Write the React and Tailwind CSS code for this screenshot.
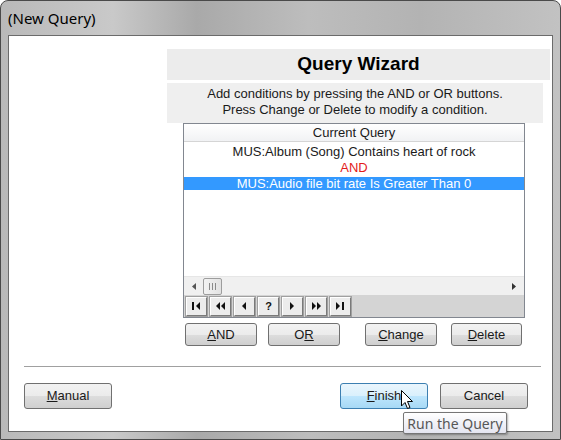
import React from "react"

const font = { fontFamily: '"Liberation Sans", Arial, sans-serif' }

// dialog push button, Vista style
function Btn({ children, className = "", hot = false }) {
  return (
    <div
      className={`flex items-center justify-center rounded-[3px] border text-[13px] text-[#1a1a1a] ${
        hot
          ? "border-[#3c7fb1] bg-[linear-gradient(#eaf6fd_0%,#d9f0fc_50%,#bee6fd_50%,#a7d9f5_100%)]"
          : "border-[#707070] bg-[linear-gradient(#f2f2f2_0%,#ebebeb_50%,#dddddd_50%,#cfcfcf_100%)]"
      } ${className}`}
    >
      {children}
    </div>
  )
}

function NavBtn({ children }) {
  return (
    <div className="flex h-[19px] w-[21px] items-center justify-center border border-t-white border-l-white border-r-[#7a7a7a] border-b-[#7a7a7a] bg-[#ececec] shadow-[0_0_0_1px_#a0a0a0]">
      {children}
    </div>
  )
}

const Tri = ({ dir = "l", x = 0 }) =>
  dir === "l" ? (
    <polygon points={`${x + 4},0 ${x + 4},8 ${x},4`} fill="#111" />
  ) : (
    <polygon points={`${x},0 ${x},8 ${x + 4},4`} fill="#111" />
  )

function Navigator() {
  return (
    <div className="flex h-[22px] items-center gap-[3px] bg-[#d4d4d4] pl-[2px]">
      <NavBtn>
        <svg width="9" height="8">
          <rect x="0" y="0" width="2" height="8" fill="#111" />
          <Tri dir="l" x={4} />
        </svg>
      </NavBtn>
      <NavBtn>
        <svg width="10" height="8">
          <Tri dir="l" x={0} />
          <Tri dir="l" x={5} />
        </svg>
      </NavBtn>
      <NavBtn>
        <svg width="5" height="8">
          <Tri dir="l" x={0} />
        </svg>
      </NavBtn>
      <NavBtn>
        <span className="text-[11px] font-bold leading-none text-[#111]">?</span>
      </NavBtn>
      <NavBtn>
        <svg width="5" height="8">
          <Tri dir="r" x={0} />
        </svg>
      </NavBtn>
      <NavBtn>
        <svg width="10" height="8">
          <Tri dir="r" x={0} />
          <Tri dir="r" x={5} />
        </svg>
      </NavBtn>
      <NavBtn>
        <svg width="9" height="8">
          <Tri dir="r" x={0} />
          <rect x="6" y="0" width="2" height="8" fill="#111" />
        </svg>
      </NavBtn>
    </div>
  )
}

function ScrollBar() {
  return (
    <div className="flex h-[19px] items-center border-t border-[#e6e6e6] bg-[#f0f0f0] px-[8px]">
      <svg width="4" height="7">
        <polygon points="4,0 4,7 0,3.5" fill="#555" />
      </svg>
      <div className="ml-[7px] flex h-[17px] w-[19px] items-center justify-center gap-[2px] rounded-[2px] border border-[#9d9d9d] bg-[linear-gradient(90deg,#f3f3f3,#e2e2e2)]">
        <span className="h-[7px] w-px bg-[#8a8a8a]" />
        <span className="h-[7px] w-px bg-[#8a8a8a]" />
        <span className="h-[7px] w-px bg-[#8a8a8a]" />
      </div>
      <div className="flex-1" />
      <svg width="4" height="7">
        <polygon points="0,0 0,7 4,3.5" fill="#333" />
      </svg>
    </div>
  )
}

function QueryGrid() {
  return (
    <div className="ml-[16px] flex h-[195px] w-[342px] flex-col border border-[#828790] bg-white text-[13px] text-[#1a1a1a]">
      <div className="h-[18px] border-b border-[#d5d5d5] bg-[linear-gradient(#ffffff,#f1f2f4)] text-center leading-[17px]">
        Current Query
      </div>
      <div className="mt-[2px] h-[16px] text-center leading-[16px]">MUS:Album (Song) Contains heart of rock</div>
      <div className="h-[16px] text-center leading-[16px] text-[#e31b1b]">AND</div>
      <div className="mt-[1px] h-[13px] bg-[#3399ff] text-center leading-[13px] text-white">
        MUS:Audio file bit rate Is Greater Than 0
      </div>
      <div className="flex-1" />
      <ScrollBar />
      <Navigator />
    </div>
  )
}

export default function App() {
  return (
    <div className="relative h-[440px] w-[561px] overflow-hidden bg-white" style={font}>
      <div className="flex h-[440px] w-[561px] flex-col rounded-t-[8px] border border-[#4a4a4a] bg-[linear-gradient(90deg,#b9b9b9_0%,#c9c9c9_20%,#a9a9a9_35%,#bdbdbd_55%,#b3b3b3_75%,#c2c2c2_100%)]">
        <div className="h-[34px] px-[7px] pt-[6px] text-[15px] text-black" style={{ fontFamily: '"Noto Sans", "Open Sans", sans-serif' }}>
          (New Query)
        </div>
        <div className="mx-[7px] mb-[7px] flex flex-1 flex-col border border-[#6b6b6b] bg-white">
          <div className="ml-[158px] mt-[13px] flex flex-col">
            <div className="flex h-[31px] w-[383px] items-center justify-center bg-[#ececec] text-[19px] font-bold text-black">
              Query Wizard
            </div>
            <div className="mt-[3px] h-[40px] w-[376px] bg-[#efefef] pt-[3px] text-center text-[13px] leading-[16px] text-[#1a1a1a]">
              Add conditions by pressing the AND or OR buttons.
              <br />
              Press Change or Delete to modify a condition.
            </div>
            <QueryGrid />
            <div className="mt-[5px] flex h-[23px]">
              <Btn className="ml-[18px] w-[72px]">
                <u>A</u>ND
              </Btn>
              <Btn className="ml-[11px] w-[72px]">
                O<u>R</u>
              </Btn>
              <Btn className="ml-[25px] w-[72px]">
                <u>C</u>hange
              </Btn>
              <Btn className="ml-[14px] w-[71px]">
                <u>D</u>elete
              </Btn>
            </div>
          </div>
          <div className="ml-[15px] mt-[20px] h-px w-[517px] bg-[#a0a0a0]" />
          <div className="mt-[16px] flex h-[26px]">
            <Btn className="ml-[15px] w-[88px]">
              <u>M</u>anual
            </Btn>
            <Btn hot className="ml-[228px] w-[88px]">
              <u>F</u>inish
            </Btn>
            <Btn className="ml-[12px] w-[88px]">Cancel</Btn>
          </div>
        </div>
      </div>

      {/* tooltip over the Finish button */}
      <div
        className="absolute left-[403px] top-[412px] flex h-[22px] w-[104px] items-center justify-center rounded-[2px] border border-[#767676] bg-[linear-gradient(#ffffff,#e4e5f0)] text-[14px] text-[#575757] shadow-[1px_1px_2px_rgba(0,0,0,0.3)]"
        style={{ fontFamily: '"Noto Sans", "Open Sans", sans-serif' }}
      >
        Run the Query
      </div>

      {/* mouse pointer */}
      <svg className="absolute left-[401px] top-[390px]" width="13" height="20" viewBox="0 0 13 20">
        <path d="M0.5 0.5 L0.5 16 L4 12.5 L6.5 18.5 L9 17.5 L6.5 11.5 L11.5 11.5 Z" fill="white" stroke="black" strokeWidth="1" strokeLinejoin="round" />
      </svg>
    </div>
  )
}
